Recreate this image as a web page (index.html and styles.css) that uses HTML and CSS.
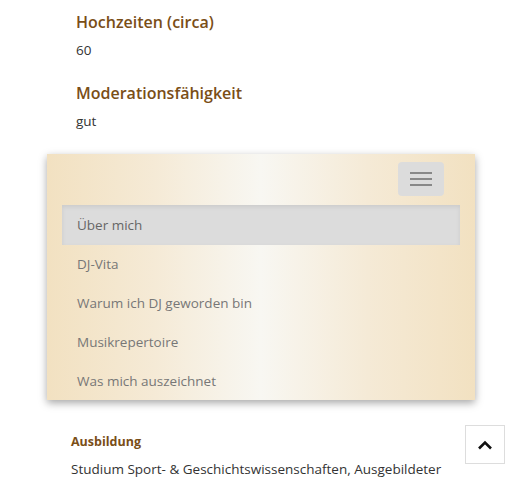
FILE: index.html
```html
<!DOCTYPE html>
<html lang="de">
<head>
    <meta charset="UTF-8">
    <meta name="viewport" content="width=device-width, initial-scale=1.0">
    <title>DJ Profil</title>
    <link rel="stylesheet" href="styles.css">
</head>
<body>
    <div class="facts">
        <h3>Hochzeiten (circa)</h3>
        <p>60</p>
        <h3>Moderationsfähigkeit</h3>
        <p>gut</p>
    </div>
    <nav class="menu">
        <div class="menu-top">
            <button class="toggle">
                <span></span><span></span><span></span>
            </button>
        </div>
        <ul>
            <li class="active">Über mich</li>
            <li>DJ-Vita</li>
            <li>Warum ich DJ geworden bin</li>
            <li>Musikrepertoire</li>
            <li>Was mich auszeichnet</li>
        </ul>
    </nav>
    <div class="education">
        <h4>Ausbildung</h4>
        <p>Studium Sport- &amp; Geschichtswissenschaften, Ausgebildeter</p>
    </div>
    <a class="to-top" href="#">
        <svg width="16" height="10" viewBox="0 0 16 10"><path d="M2 8.5 L8 2.5 L14 8.5" fill="none" stroke="#111" stroke-width="2.6"/></svg>
    </a>
</body>
</html>
```
FILE: styles.css
```css
body {
    margin: 0;
    font-family: "Open Sans", sans-serif;
    color: #333;
    background: #fff;
    height: 486px;
    overflow: hidden;
    position: relative;
}
.facts {
    padding: 9px 0 0 76px;
}
.facts h3 {
    margin: 0;
    font-size: 16px;
    font-weight: 600;
    color: #7a4e17;
    line-height: 26px;
}
.facts p {
    margin: 4px 0 19px;
    font-size: 13.5px;
    line-height: 22px;
}
.menu {
    margin: 22px 0 0 47px;
    width: 428px;
    height: 246px;
    box-sizing: border-box;
    background: linear-gradient(90deg, #f2e1c1 0%, #f5ead6 25%, #f8f7f2 50%, #f5ead6 75%, #f2e1c1 100%);
    box-shadow: 0 3px 8px rgba(0, 0, 0, 0.35);
    padding: 8px 15px;
}
.menu-top {
    display: flex;
    justify-content: flex-end;
    padding-right: 16px;
}
.toggle {
    width: 46px;
    height: 34px;
    border: none;
    border-radius: 4px;
    background: #dcdcdc;
    display: flex;
    flex-direction: column;
    justify-content: center;
    align-items: center;
    gap: 4px;
    padding: 0;
}
.toggle span {
    display: block;
    width: 22px;
    height: 2px;
    background: #888;
}
.menu ul {
    list-style: none;
    margin: 9px 0 0;
    padding: 0;
}
.menu li {
    height: 39px;
    line-height: 39px;
    padding-left: 15px;
    font-size: 13.5px;
    color: #777;
}
.menu li.active {
    height: 40px;
    line-height: 40px;
    background: #dcdcdc;
    box-shadow: inset 0 2px 4px rgba(0, 0, 0, 0.08);
    color: #666;
}
.education {
    padding: 31px 0 0 71px;
}
.education h4 {
    margin: 0;
    font-size: 12.5px;
    font-weight: 700;
    color: #7a4e17;
    line-height: 22px;
}
.education p {
    margin: 5px 0 0;
    font-size: 13.5px;
    line-height: 22px;
}
.to-top {
    position: absolute;
    left: 465px;
    top: 425px;
    width: 40px;
    height: 39px;
    box-sizing: border-box;
    border: 1px solid #ddd;
    background: #fff;
    display: flex;
    justify-content: center;
    align-items: center;
}
```
